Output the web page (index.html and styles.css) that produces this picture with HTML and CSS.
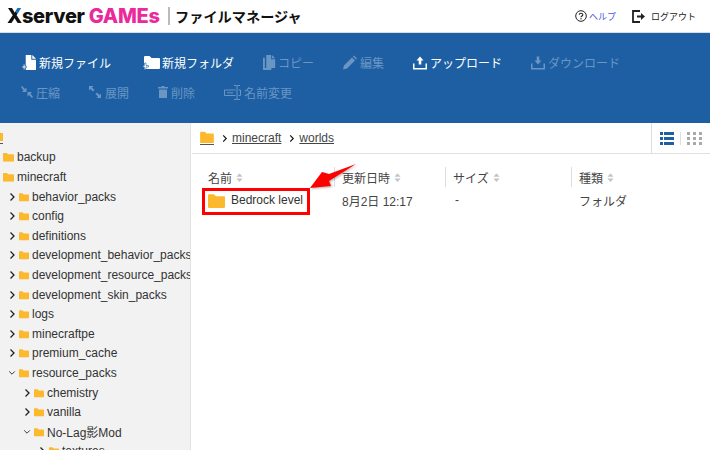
FILE: index.html
```html
<!DOCTYPE html>
<html lang="ja">
<head>
    <meta charset="UTF-8">
    <meta name="viewport" content="width=device-width, initial-scale=1.0">
    <title>ファイルマネージャ</title>
    <link rel="stylesheet" href="styles.css">
</head>
<body>

<svg class="defs" width="0" height="0">
    <symbol id="folder" viewBox="0 0 16 14"><path d="M0 2a1 1 0 0 1 1-1h4.500l2 2H15a1 1 0 0 1 1 1v9a1 1 0 0 1-1 1H1a1 1 0 0 1-1-1z"/></symbol>
    <symbol id="sort" viewBox="0 0 8 10"><path d="M4 0l3.500 4h-7zM4 10L.5 6h7z"/></symbol>
    <symbol id="right" viewBox="0 0 8 10"><path d="M2.500 1.500L6 5 2.500 8.500" fill="none" stroke="currentColor" stroke-width="1.300"/></symbol>
    <symbol id="down" viewBox="0 0 10 8"><path d="M1.500 2L5 5.500 8.500 2" fill="none" stroke="currentColor" stroke-width="1.100"/></symbol>
    <symbol id="file" viewBox="0 0 14 16"><path d="M3 0h6v5h5v11H3zM10 0l4 4h-4z"/></symbol>
    <symbol id="compress" viewBox="0 0 12 12"><path d="M0 1l1-1 3 3 1.500-1.500V6H1l1.500-1.500zM12 11l-1 1-3-3-1.500 1.500V6H11L9.500 7.500z"/></symbol>
    <symbol id="expand" viewBox="0 0 12 12"><path d="M0 0h4.500L3 1.500 5.500 4 4 5.500 1.500 3 0 4.500zM12 12H7.500L9 10.500 6.500 8 8 6.500 10.500 9 12 7.500z"/></symbol>
</svg>

<!-- ヘッダー -->
<header class="top">
    <div class="logo"><span class="logo-x">X</span>server <span class="logo-pink">GAMEs</span></div>
    <div class="title">ファイルマネージャ</div>
    <div class="top-links">
        <svg class="ico-help" viewBox="0 0 12 12"><circle cx="6" cy="6" r="5.300" fill="none" stroke="#222" stroke-width="1"/><path d="M4.200 4.800C4.200 2.800 7.800 2.800 7.800 4.700 7.800 6 6 5.900 6 7.300" fill="none" stroke="#222" stroke-width="1.100"/><rect x="5.400" y="8.200" width="1.200" height="1.200" fill="#222"/></svg>
        <a class="help">ヘルプ</a>
        <svg class="ico-logout" viewBox="0 0 13 13"><path d="M8 1H1v11h7" fill="none" stroke="#222" stroke-width="1.800"/><path d="M5 5.500h4V3l4 3.500L9 10V7.500H5z" fill="#222"/></svg>
        <a class="logout">ログアウト</a>
    </div>
</header>

<!-- ツールバー -->
<nav class="toolbar">
    <div class="tool-row">
        <span class="tool on new-file"><svg class="ico" viewBox="0 0 15 16"><use href="#file" x="1" width="14" height="16"/><path d="M3 10v2h2v1.500H3v2H1.500v-2H0V12h1.500v-2z" stroke="#1e5fa3" stroke-width=".6"/></svg>新規ファイル</span>
        <span class="tool on new-folder"><svg class="ico ico-w" viewBox="0 0 17 15"><use href="#folder" x="1" y="0" width="16" height="14"/><path d="M3 8v2.500h2.500V12H3v2.500H1.500V12H0v-1.500h1.500V8z" stroke="#1e5fa3" stroke-width=".6"/></svg>新規フォルダ</span>
        <span class="tool copy"><svg class="ico" viewBox="0 0 14 16"><path d="M0 3h2v11h7v2H0z"/><use href="#file" x="0" width="14" height="14"/></svg>コピー</span>
        <span class="tool edit"><svg class="ico" viewBox="0 0 14 14"><path d="M0 14l1-4 8-8 3 3-8 8zM10 1l1-1 3 3-1 1z"/></svg>編集</span>
        <span class="tool on upload"><svg class="ico" viewBox="0 0 14 14"><path d="M7 1l3.500 4H8.300v4H5.700V5H3.500zM0 8h1.500v4.500h11V8H14v6H0z"/></svg>アップロード</span>
        <span class="tool download"><svg class="ico" viewBox="0 0 14 14"><path d="M7 9L3.500 5h2.200V1h2.600v4h2.200zM0 8h1.500v4.500h11V8H14v6H0z"/></svg>ダウンロード</span>
    </div>
    <div class="tool-row">
        <span class="tool zip"><svg class="ico-sm" viewBox="0 0 12 12"><use href="#compress"/></svg>圧縮</span>
        <span class="tool unzip"><svg class="ico-sm" viewBox="0 0 12 12"><use href="#expand"/></svg>展開</span>
        <span class="tool trash"><svg class="ico-trash" viewBox="0 0 10 12"><path d="M3.500 0h3v1H10v1.500H0V1h3.500zM1 3.500h8V12H1z"/></svg>削除</span>
        <span class="tool rename"><svg class="ico-rename" viewBox="0 0 17 15"><path d="M.5 5h11M.5 10.500h11M.5 5v5.500M3 7.800h6" fill="none" stroke="currentColor"/><path d="M14.500 5h2M14.500 10.500h2M16.500 5v5.500M10 .5h2.500l.5.7.5-.7H16M10 14.500h2.500l.5-.7.5.7H16M13 1v13" fill="none" stroke="currentColor"/></svg>名前変更</span>
    </div>
</nav>

<div class="content">
    <!-- フォルダツリー -->
    <aside class="tree">
        <div class="root-mark"><svg class="root-ico" viewBox="0 0 11 13"><path d="M0 1h4l1 1h6v8H0z" fill="#fdb92e"/><path d="M0 12.500h11" stroke="#555"/></svg></div>
        <div class="node l0"><span class="arrow"></span><svg class="fld" viewBox="0 0 16 14"><use href="#folder"/></svg>backup</div>
        <div class="node l0"><span class="arrow"></span><svg class="fld" viewBox="0 0 16 14"><use href="#folder"/></svg>minecraft</div>
        <div class="node l1"><svg class="arrow" viewBox="0 0 8 10"><use href="#right"/></svg><svg class="fld" viewBox="0 0 16 14"><use href="#folder"/></svg>behavior_packs</div>
        <div class="node l1"><svg class="arrow" viewBox="0 0 8 10"><use href="#right"/></svg><svg class="fld" viewBox="0 0 16 14"><use href="#folder"/></svg>config</div>
        <div class="node l1"><svg class="arrow" viewBox="0 0 8 10"><use href="#right"/></svg><svg class="fld" viewBox="0 0 16 14"><use href="#folder"/></svg>definitions</div>
        <div class="node l1"><svg class="arrow" viewBox="0 0 8 10"><use href="#right"/></svg><svg class="fld" viewBox="0 0 16 14"><use href="#folder"/></svg>development_behavior_packs</div>
        <div class="node l1"><svg class="arrow" viewBox="0 0 8 10"><use href="#right"/></svg><svg class="fld" viewBox="0 0 16 14"><use href="#folder"/></svg>development_resource_packs</div>
        <div class="node l1"><svg class="arrow" viewBox="0 0 8 10"><use href="#right"/></svg><svg class="fld" viewBox="0 0 16 14"><use href="#folder"/></svg>development_skin_packs</div>
        <div class="node l1"><svg class="arrow" viewBox="0 0 8 10"><use href="#right"/></svg><svg class="fld" viewBox="0 0 16 14"><use href="#folder"/></svg>logs</div>
        <div class="node l1"><svg class="arrow" viewBox="0 0 8 10"><use href="#right"/></svg><svg class="fld" viewBox="0 0 16 14"><use href="#folder"/></svg>minecraftpe</div>
        <div class="node l1"><svg class="arrow" viewBox="0 0 8 10"><use href="#right"/></svg><svg class="fld" viewBox="0 0 16 14"><use href="#folder"/></svg>premium_cache</div>
        <div class="node l1"><svg class="arrow" viewBox="0 0 10 8"><use href="#down"/></svg><svg class="fld" viewBox="0 0 16 14"><use href="#folder"/></svg>resource_packs</div>
        <div class="node l2"><svg class="arrow" viewBox="0 0 8 10"><use href="#right"/></svg><svg class="fld" viewBox="0 0 16 14"><use href="#folder"/></svg>chemistry</div>
        <div class="node l2"><svg class="arrow" viewBox="0 0 8 10"><use href="#right"/></svg><svg class="fld" viewBox="0 0 16 14"><use href="#folder"/></svg>vanilla</div>
        <div class="node l2"><svg class="arrow" viewBox="0 0 10 8"><use href="#down"/></svg><svg class="fld" viewBox="0 0 16 14"><use href="#folder"/></svg>No-Lag影Mod</div>
        <div class="node l3"><svg class="arrow" viewBox="0 0 8 10"><use href="#right"/></svg><svg class="fld" viewBox="0 0 16 14"><use href="#folder"/></svg>textures</div>
    </aside>

    <main class="main">
        <!-- パンくず -->
        <div class="crumbs">
            <svg class="crumb-home" viewBox="0 0 14 14"><use href="#folder" width="14" height="12"/><path d="M0 13.500h14" stroke="#555" stroke-width="1"/></svg>
            <svg class="crumb-sep" viewBox="0 0 8 10"><use href="#right"/></svg>
            <a class="crumb">minecraft</a>
            <svg class="crumb-sep" viewBox="0 0 8 10"><use href="#right"/></svg>
            <a class="crumb">worlds</a>
            <div class="views">
                <svg class="view-list" viewBox="0 0 14 13"><path d="M0 0h3v3H0zM4 0h10v3H4zM0 5h3v3H0zM4 5h10v3H4zM0 10h3v3H0zM4 10h10v3H4z"/></svg>
                <svg class="view-grid" viewBox="0 0 15 13"><path d="M0 0h3v3H0zM6 0h3v3H6zM12 0h3v3h-3zM0 5h3v3H0zM6 5h3v3H6zM12 5h3v3h-3zM0 10h3v3H0zM6 10h3v3H6zM12 10h3v3h-3z"/></svg>
            </div>
        </div>

        <!-- ファイル一覧 -->
        <div class="files">
            <div class="th">名前<svg class="sort" viewBox="0 0 8 10"><use href="#sort"/></svg></div>
            <div class="th sep">更新日時<svg class="sort" viewBox="0 0 8 10"><use href="#sort"/></svg></div>
            <div class="th sep">サイズ<svg class="sort" viewBox="0 0 8 10"><use href="#sort"/></svg></div>
            <div class="th sep">種類<svg class="sort" viewBox="0 0 8 10"><use href="#sort"/></svg></div>
            <div class="td name"><svg class="fld-big" viewBox="0 0 16 14"><use href="#folder"/></svg>Bedrock level</div>
            <div class="td">8月2日 12:17</div>
            <div class="td size">-</div>
            <div class="td">フォルダ</div>
        </div>

        <!-- 注釈 -->
        <div class="mark-box"></div>
        <svg class="mark-arrow" viewBox="0 0 48 26"><path d="M47 1L20 11l-7-2L1 25l21-2-2-5 27-17z" fill="#f00"/></svg>
    </main>
</div>

</body>
</html>
```

FILE: styles.css
```css
body {
    margin: 0;
    width: 710px;
    height: 450px;
    overflow: hidden;
    background-color: #fff;
    font-family: "Liberation Sans", Arial, "Noto Sans CJK JP", sans-serif;
    font-size: 12px;
    color: #333;
}
.defs {
    position: absolute;
}

/* header */
.top {
    display: flex;
    align-items: center;
    height: 32px;
    border-bottom: 1px solid #d9dde2;
}
.logo {
    margin-left: 7px;
    width: 161px;
    font-family: "Inter", sans-serif;
    font-weight: 800;
    font-size: 20px;
    letter-spacing: -0.3px;
    color: #111;
    white-space: nowrap;
}
.logo-x {
    background: linear-gradient(to top right, #111 62%, #1d6fb8 62%);
    -webkit-background-clip: text;
    background-clip: text;
    color: transparent;
}
.logo-pink {
    color: #ea2a9b;
}
.title {
    border-left: 2px solid #bbb;
    height: 18px;
    line-height: 18px;
    padding-left: 5px;
    font-family: "Noto Sans CJK JP", sans-serif;
    font-weight: 700;
    font-size: 14.200px;
    color: #111;
}
.top-links {
    display: flex;
    align-items: center;
    margin-left: auto;
    margin-right: 14px;
    font-family: "Noto Sans CJK JP", sans-serif;
    font-size: 9px;
}
.ico-help {
    width: 12px;
    height: 12px;
    margin-right: 2px;
}
.help {
    color: #4a5ae0;
    margin-right: 16px;
}
.ico-logout {
    width: 13px;
    height: 13px;
    margin-right: 6px;
}
.logout {
    color: #222;
}

/* toolbar */
.toolbar {
    height: 90px;
    box-sizing: border-box;
    padding: 14px 0 0 22px;
    background-color: #1e5fa3;
    font-family: "Noto Sans CJK JP", sans-serif;
}
.tool-row {
    display: flex;
    align-items: center;
    height: 30px;
    gap: 29px;
}
.tool {
    display: flex;
    align-items: center;
    color: #6a96c4;
    font-size: 12px;
    white-space: nowrap;
}
.tool svg {
    fill: #6a96c4;
    color: #6a96c4;
    flex: none;
}
.tool.on {
    color: #fff;
}
.tool.on svg {
    fill: #fff;
}
.ico {
    width: 14px;
    height: 15px;
    margin-right: 3px;
}
.ico-w {
    width: 17px;
    margin-right: 2px;
}
.new-folder {
    margin-left: 3px;
}
.copy .ico {
    width: 13px;
    margin-right: 2px;
}
.ico-sm {
    width: 12px;
    height: 12px;
    margin-right: 4px;
}
.ico-trash {
    width: 10px;
    height: 12px;
    margin-right: 3px;
}
.ico-rename {
    width: 17px;
    height: 15px;
    margin-right: 3px;
}
.zip {
    margin-left: -1px;
}
.zip .ico-sm {
    margin-right: 3px;
}

/* layout */
.content {
    display: flex;
    height: 327px;
}
.tree {
    width: 191px;
    flex: none;
    overflow: hidden;
    box-sizing: border-box;
    background-color: #f2f2f2;
    border-right: 1px solid #e2e2e2;
    padding-top: 5px;
    white-space: nowrap;
}
.root-mark {
    display: flex;
    align-items: center;
    height: 19.600px;
    margin-left: -8px;
}
.root-ico {
    width: 11px;
    height: 13px;
}
.node {
    display: flex;
    align-items: center;
    height: 19.600px;
    color: #333;
}
.l0 {
    padding-left: 3px;
}
.l1 {
    padding-left: 8px;
}
.l2 {
    padding-left: 23px;
}
.l3 {
    padding-left: 38px;
}
.arrow {
    width: 8px;
    height: 10px;
    margin-right: 3px;
    flex: none;
    color: #222;
}
.l0 .arrow {
    display: none;
}
.fld {
    width: 11px;
    height: 10px;
    fill: #fdb92e;
    margin-right: 3px;
    flex: none;
}
.l1 .fld,
.l2 .fld,
.l3 .fld {
    width: 10px;
}

/* main */
.main {
    position: relative;
    flex: 1;
    padding-left: 1px;
}
.crumbs {
    display: flex;
    align-items: center;
    height: 30px;
    border-bottom: 1px solid #e0e0e0;
    padding-left: 8px;
}
.crumb-home {
    width: 14px;
    height: 14px;
    fill: #fdb92e;
    margin-right: 7px;
}
.crumb-sep {
    width: 7px;
    height: 9px;
    color: #111;
    margin-right: 4px;
}
.crumb {
    color: #444;
    text-decoration: underline;
    margin-right: 7px;
}
.views {
    display: flex;
    align-items: center;
    margin-left: auto;
    height: 100%;
    border-left: 1px solid #ddd;
    padding-left: 8px;
    width: 50px;
}
.view-list {
    width: 14px;
    height: 13px;
    fill: #1e5fa3;
    padding-right: 6px;
    border-right: 1px solid #ddd;
    margin-right: 6px;
}
.view-grid {
    width: 15px;
    height: 13px;
    fill: #aaa;
}
.files {
    display: grid;
    grid-template-columns: 134px 111px 126px 1fr;
    grid-template-rows: 21px 24px;
    margin: 13px 0 0 16px;
}
.th {
    display: flex;
    align-items: center;
    height: 20px;
    color: #444;
}
.sep {
    border-left: 1px solid #ddd;
    padding-left: 7px;
    margin-left: -8px;
}
.sort {
    width: 7px;
    height: 9px;
    margin-left: 4px;
    fill: #c4c4c4;
}
.td {
    display: flex;
    align-items: center;
    height: 24px;
    color: #444;
}
.size {
    margin-left: 2px;
}
.name {
    color: #333;
}
.fld-big {
    width: 17px;
    height: 15px;
    fill: #fdb92e;
    margin-right: 6px;
}

/* red annotation */
.mark-box {
    position: absolute;
    left: 11px;
    top: 65px;
    width: 108px;
    height: 27px;
    box-sizing: border-box;
    border: 3px solid #f00;
}
.mark-arrow {
    position: absolute;
    left: 118px;
    top: 40px;
    width: 48px;
    height: 26px;
    filter: drop-shadow(1px 1px 1px rgba(0, 0, 0, 0.3));
}
```
